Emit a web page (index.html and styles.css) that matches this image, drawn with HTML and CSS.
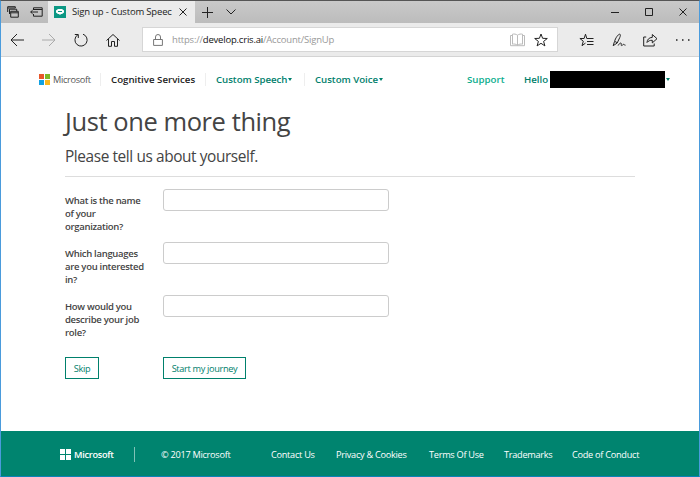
FILE: index.html
```html
<!DOCTYPE html>
<html lang="en">
<head>
<meta charset="utf-8">
<title>Sign up - Custom Speech</title>
<link rel="stylesheet" href="styles.css">
</head>
<body>
<div class="window">
  <div class="titlebar">
    <div class="tab-tools">
      <svg width="12" height="12" viewBox="0 0 12 12"><path d="M.7 6V.7h7.6V2M.7 2h7.6M2.5 8V3.2h7.2v2M3.7 5.3h7.6v5.9H3.7zM3.7 6.8h7.6"/></svg>
      <svg width="13" height="10" viewBox="0 0 13 10"><path d="M3.5 3V.8h8.7v8.4H3.5V7M3.5 2.5h8.7M.7 5H8M2.6 3.2.7 5l1.9 1.8"/></svg>
    </div>
    <div class="tab">
      <svg class="favicon" width="12" height="12" viewBox="0 0 12 12"><path fill="#0b9783" d="M0 0h12v12H0z"/><path fill="#fff" d="M4 3h4l2 1.500v2L8 8H7L6 9 5 8H4L2 6.500v-2z"/><path fill="#0b9783" d="M4 5h4v1H4z"/></svg>
      <span class="tab-title">Sign up - Custom Speec</span>
      <svg class="tab-close" width="8" height="8" viewBox="0 0 8 8"><path d="m.5.5 7 7m0-7-7 7"/></svg>
    </div>
    <svg class="new-tab" width="11" height="11" viewBox="0 0 11 11"><path d="M5.500 0v11M0 5.500h11"/></svg>
    <svg class="tab-menu" width="10" height="6" viewBox="0 0 10 6"><path d="m.5.5 4.500 4.500L9.500.5"/></svg>
    <div class="controls">
      <svg width="8" height="8" viewBox="0 0 8 8"><path d="M0 4.500h8"/></svg>
      <svg width="8" height="8" viewBox="0 0 8 8"><path d="M.5.5h7v7h-7z"/></svg>
      <svg width="8" height="8" viewBox="0 0 8 8"><path d="m.5.5 7 7m0-7-7 7"/></svg>
    </div>
  </div>
  <div class="toolbar">
    <div class="history">
      <svg width="14" height="14" viewBox="0 0 14 14"><path d="M14 7H1m6-6L1 7l6 6"/></svg>
      <svg class="disabled" width="14" height="14" viewBox="0 0 14 14"><path d="M0 7h13M7 1l6 6-6 6"/></svg>
      <svg width="14" height="14" viewBox="0 0 14 14"><path d="M9 1.200A6.100 6.100 0 1 1 3.500 2M0.800 1.500h3.500V5"/></svg>
      <svg width="14" height="14" viewBox="0 0 14 14"><path d="m.5 7.500 6.500-6 6.500 6M2.500 6v7.300h3V8.500h3v4.800h3V6"/></svg>
    </div>
    <div class="address">
      <svg class="lock" width="10" height="12" viewBox="0 0 10 12"><path d="M.6 5.500h8.800v5.900H.6zM2.500 5.500V3a2.500 2.500 0 0 1 5 0v2.500"/></svg>
      <span class="url">https://<b>develop.cris.ai</b>/Account/SignUp</span>
      <svg class="reader" width="15" height="14" viewBox="0 0 15 14"><path d="M7.500 2.200C6 1 4 .8 2.500 1.200v10C4 10.800 6 11 7.500 12.200 9 11 11 10.800 12.500 11.200v-10C11 .8 9 1 7.500 2.200zm0 0v10M2.500 2.500h-2v10.200h14V2.500h-2"/></svg>
      <svg width="14" height="14" viewBox="0 0 14 14"><path d="m7 1 1.600 4.300 4.700.2-3.700 2.900 1.300 4.500L7 10.300l-3.900 2.600 1.300-4.500L.7 5.500l4.700-.2z"/></svg>
    </div>
    <div class="actions">
      <svg width="15" height="14" viewBox="0 0 15 14"><path d="M9.500 5.500H7.800L6.500 1.200 5.100 5.500H.9l3.400 2.700L3 12.700l3.500-2.600M8 5.500h6.500M8 8.500h6.500M8 11.500h6.500"/></svg>
      <svg width="14" height="14" viewBox="0 0 14 14"><path d="M1.200 12.700 2.500 8.500C3.500 5 6 1.500 7.500 1.200c1.500 0 .8 2 .2 3.500L5.200 10l-4 2.700zM3 8.500l2.200 1.200M6.200 12.500c1-2 2.500-3 3-2.200.5.8-.5 2 .3 2.300 1 .3 1.500-1.500 2.300-1.300.7.200.7 1 1.700.9"/></svg>
      <svg width="15" height="14" viewBox="0 0 15 14"><path d="M3.200 4H.7v9h10.500v-2.500M4 9.500C4.200 6.500 6 4.500 9.300 4.400V1.500l4.700 4.200-4.700 4.200V7.300C7 7.200 5.300 7.900 4 9.500z"/></svg>
      <svg class="dots" width="14" height="14" viewBox="0 0 14 14"><path d="M0 6.200h1.500v1.500H0zM6 6.200h1.500v1.500H6zM12 6.200h1.500v1.500H12z"/></svg>
    </div>
  </div>

  <nav class="nav">
    <svg class="logo" width="11" height="11" viewBox="0 0 11 11"><path fill="#e8572a" d="M0 0h5v5H0z"/><path fill="#7db928" d="M6 0h5v5H6z"/><path fill="#12a1e2" d="M0 6h5v5H0z"/><path fill="#fbb81c" d="M6 6h5v5H6z"/></svg>
    <span class="brand">Microsoft</span>
    <span class="product">Cognitive Services</span>
    <a class="menu speech">Custom Speech<i class="caret"></i></a>
    <a class="menu voice">Custom Voice<i class="caret"></i></a>
    <a class="support">Support</a>
    <a class="hello">Hello</a>
    <span class="redacted"></span><i class="caret"></i>
  </nav>

  <main class="content">
    <h1>Just one more thing</h1>
    <h2>Please tell us about yourself.</h2>
    <form class="form">
      <label for="org">What is the name<br>of your<br>organization?</label><input id="org">
      <label for="lang">Which languages<br>are you interested<br>in?</label><input id="lang">
      <label for="role">How would you<br>describe your job<br>role?</label><input id="role">
      <button class="skip" type="button">Skip</button>
      <button class="start" type="button">Start my journey</button>
    </form>
  </main>

  <footer class="footer">
    <svg width="11" height="11" viewBox="0 0 11 11"><path fill="#fff" d="M0 0h5v5H0zM6 0h5v5H6zM0 6h5v5H0zM6 6h5v5H6z"/></svg>
    <span class="footer-brand">Microsoft</span>
    <span class="copyright">© 2017 Microsoft</span>
    <a class="contact">Contact Us</a>
    <a class="privacy">Privacy &amp; Cookies</a>
    <a class="terms">Terms Of Use</a>
    <a class="trademarks">Trademarks</a>
    <a class="conduct">Code of Conduct</a>
  </footer>
</div>
</body>
</html>
```
FILE: styles.css
```css
* { box-sizing: border-box; }
body { margin: 0; font-family: "Open Sans", "Noto Sans", sans-serif; color: #444; }
svg { display: block; flex: none; fill: none; stroke: #222; stroke-width: 1; }
.favicon, .logo, .footer svg { stroke: none; }
.window {
  width: 700px; height: 477px;
  display: flex; flex-direction: column;
  border: 1px solid #4a9bdc; border-top-color: #555; border-bottom-color: #0a84b8;
  background: #fff; overflow: hidden; white-space: nowrap;
}

.titlebar { height: 22px; flex: none; display: flex; align-items: center; background: linear-gradient(#c9c9c9, #bcbcbc); }
.tab-tools { width: 47px; padding-left: 6px; display: flex; align-items: center; gap: 11px; }
.tab { width: 147px; height: 22px; display: flex; align-items: center; padding-left: 6px; background: #ebebeb; }
.tab-title { width: 101px; margin-left: 6px; font-size: 9.500px; letter-spacing: -.18px; line-height: 14px; color: #222; }
.tab-close { margin-left: 6px; }
.new-tab { margin-left: 7px; }
.tab-menu { margin-left: 13px; }
.controls { margin-left: auto; margin-right: 12px; display: flex; gap: 26px; }

.toolbar { height: 34px; flex: none; display: flex; align-items: center; background: #ebebeb; border-bottom: 1px solid #d4d4d4; }
.history { display: flex; width: 141px; padding-left: 9px; gap: 18px; }
.disabled { stroke: #aaa; }
.address { width: 416px; height: 25px; display: flex; align-items: center; padding-left: 10px; background: #fff; border: 1px solid #d6d6d6; }
.lock { stroke: #777; }
.url { width: 338px; margin-left: 9px; font-size: 9.500px; letter-spacing: -.2px; color: #999; }
.url b { font-weight: 400; color: #111; }
.reader { stroke: #bbb; margin-right: 9px; }
.actions { display: flex; gap: 17.500px; margin-left: 21px; }
.dots { stroke: none; fill: #222; }

.nav { height: 45px; flex: none; display: flex; align-items: center; padding-left: 38px; font-size: 9.700px; font-weight: 600; color: #00806c; }
.brand { box-sizing: content-box; width: 47px; margin-left: 3px; font-size: 9.200px; font-weight: 400; letter-spacing: -.3px; line-height: 13px; color: #555; border-right: 1px solid #eee; }
.product { width: 105px; padding-left: 10px; line-height: 13px; color: #222; }
.product, .speech { border-right: 1px solid #eee; }
.menu { display: flex; align-items: center; line-height: 13px; padding-left: 10px; letter-spacing: -.05px; }
.speech { width: 99px; }
.voice { width: 162px; }
.caret { border: 2.500px solid transparent; border-width: 3px 2.500px 0; border-top-color: #00806c; margin-left: 1px; }
.support { width: 57px; color: #0aad8d; }
.hello { width: 26px; }
.redacted { width: 115px; height: 17px; background: #000; }

.content { padding: 1px 64px 0; flex: 1; }
h1 { margin: 0; height: 36px; font-size: 25.500px; line-height: 36px; font-weight: 400; letter-spacing: -.42px; }
h2 { margin: 0; height: 38px; font-size: 15.400px; line-height: 35px; font-weight: 400; letter-spacing: -.4px; border-bottom: 1px solid #ddd; }
.form { display: grid; grid-template-columns: 98px 226px; grid-auto-rows: 53px; padding-top: 12px; }
label { padding-top: 5px; font-size: 9.500px; line-height: 13px; font-weight: 600; letter-spacing: -.3px; }
input { width: 226px; height: 22px; border: 1px solid #ccc; border-radius: 3px; padding: 0 6px; }
button { height: 22px; justify-self: start; margin-top: 9px; padding: 0; border: 1px solid #00806c; background: #fff; color: #00806c; font: 9.200px "Open Sans", sans-serif; letter-spacing: -.33px; }
.skip { width: 34px; }
.start { width: 83px; }

.footer { height: 45px; flex: none; display: flex; align-items: center; padding: 2px 0 0 59px; background: #00846f; color: #fff; font-size: 9.200px; letter-spacing: -.28px; }
.footer-brand { width: 61px; margin-left: 3px; line-height: 15px; font-weight: 600; border-right: 1px solid #80c2b7; }
.copyright { width: 136px; padding-left: 26px; }
.contact { width: 65px; }
.privacy { width: 93px; }
.terms { width: 75px; }
.trademarks { width: 68px; }
```
